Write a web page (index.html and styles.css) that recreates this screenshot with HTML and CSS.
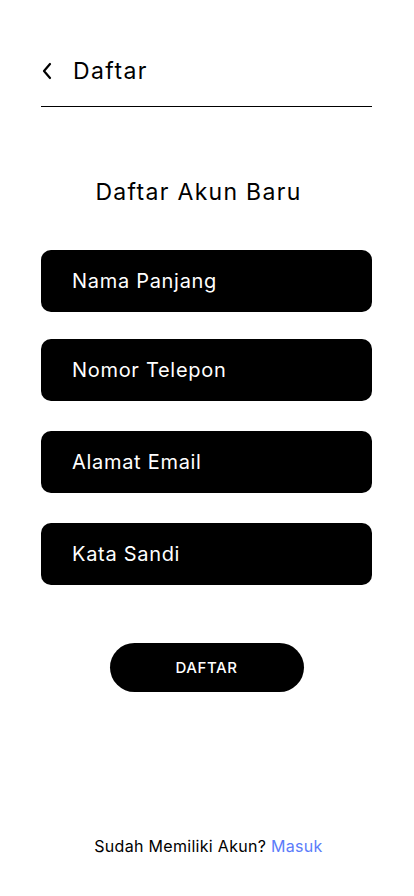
FILE: index.html
```html
<!DOCTYPE html>
<html lang="id">
<head>
<meta charset="utf-8">
<meta name="viewport" content="width=device-width, initial-scale=1">
<title>Daftar</title>
<link rel="stylesheet" href="styles.css">
</head>
<body>
<div class="page">
  <header class="topbar">
    <button class="back" aria-label="Kembali">
      <svg width="12" height="18" viewBox="0 0 12 18" fill="none"><path d="M9 2 L3 9 L9 16" stroke="#000" stroke-width="2.2" stroke-linecap="round" stroke-linejoin="round"/></svg>
    </button>
    <h1 class="topbar-title">Daftar</h1>
  </header>
  <h2 class="heading">Daftar Akun Baru</h2>
  <form class="form">
    <div class="field f1">Nama Panjang</div>
    <div class="field f2">Nomor Telepon</div>
    <div class="field f3">Alamat Email</div>
    <div class="field f4">Kata Sandi</div>
    <button type="button" class="submit">DAFTAR</button>
  </form>
  <p class="footer">Sudah Memiliki Akun? <a class="link" href="#">Masuk</a></p>
</div>
</body>
</html>
```
FILE: styles.css
```css
* { box-sizing: border-box; }
html, body { margin: 0; padding: 0; background: #fff; }
body { font-family: Inter, "Noto Sans", sans-serif; color: #000; }
.page {
  width: 414px;
  min-height: 896px;
  padding: 0 42px 0 41px;
  display: flex;
  flex-direction: column;
}
.topbar {
  display: flex;
  align-items: center;
  height: 107px;
  padding-top: 36px;
  border-bottom: 1px solid #000;
}
.back {
  border: 0;
  background: none;
  padding: 0;
  width: 32px;
  display: flex;
  align-items: center;
}
.topbar-title {
  margin: 0;
  font-size: 23px;
  font-weight: 400;
  letter-spacing: 1.4px;
}
.heading {
  margin: 70px 0 0;
  padding-right: 16px;
  text-align: center;
  font-size: 23px;
  font-weight: 400;
  line-height: 30px;
  letter-spacing: 1.3px;
}
.form {
  display: flex;
  flex-direction: column;
  margin-top: 43px;
}
.field {
  height: 62px;
  background: #000;
  color: #fff;
  border-radius: 10px;
  padding-left: 31px;
  display: flex;
  align-items: center;
  font-size: 20px;
  letter-spacing: 0.7px;
}
.f2 { margin-top: 27px; }
.f3 { margin-top: 30px; }
.f4 { margin-top: 30px; }
.submit {
  align-self: center;
  margin-top: 58px;
  width: 194px;
  height: 49px;
  border: 0;
  border-radius: 25px;
  background: #000;
  color: #fff;
  font-family: inherit;
  font-size: 15px;
  font-weight: 500;
  letter-spacing: 0.6px;
}
.footer {
  margin: auto 0 40px;
  padding-left: 4px;
  text-align: center;
  font-size: 16px;
  letter-spacing: 0.3px;
}
.link { color: #5b7cfa; text-decoration: none; }
```
